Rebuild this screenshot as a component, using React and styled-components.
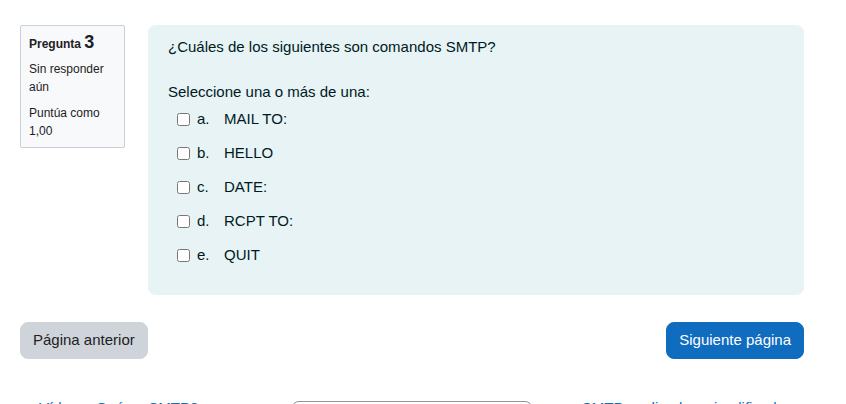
import React from "react";
import styled, { createGlobalStyle } from "styled-components";

const Global = createGlobalStyle`
  html, body { margin: 0; padding: 0; background: #fff; }
  body {
    font-family: "Liberation Sans", Arial, sans-serif;
    font-size: 15px;
    line-height: 22.5px;
    color: #1d2125;
  }
`;

const Page = styled.div`
  width: 846px;
  box-sizing: border-box;
  padding: 25px 42px 0 20px;
`;

const QuestionRow = styled.div`
  display: flex;
  align-items: flex-start;
  gap: 23px;
`;

const Info = styled.div`
  width: 105px;
  flex: none;
  box-sizing: border-box;
  background: #f8f9fa;
  border: 1px solid #cad0d7;
  border-radius: 2px;
  padding: 6px 8px 7px;
  color: #1d2125;
`;

const QNo = styled.h3`
  margin: 0 0 6px;
  font-size: 12px;
  line-height: 20px;
  font-weight: bold;
`;

const QNum = styled.span`
  font-size: 18px;
  line-height: 20px;
`;

const InfoText = styled.div`
  font-size: 12px;
  line-height: 18px;
  & + & { margin-top: 7.5px; }
`;

const Formulation = styled.div`
  flex: 1;
  background: #e7f3f5;
  color: #001a1e;
  border-radius: 8px;
  padding: 11px 20px 21.5px;
`;

const QText = styled.p`
  margin: 0 0 22.5px;
`;

const Prompt = styled.div``;

const Answers = styled.div`
  padding-left: 9px;
`;

const AnswerRow = styled.label`
  display: flex;
  align-items: center;
  padding: 4.5px 0;
  margin-bottom: 2.5px;
`;

const Check = styled.input`
  width: 13px;
  height: 13px;
  margin: 0 7px 0 0;
  flex: none;
`;

const AnsNum = styled.span`
  width: 27px;
  flex: none;
`;

const ButtonRow = styled.div`
  display: flex;
  justify-content: space-between;
  margin-top: 27px;
`;

const Button = styled.button`
  font-family: inherit;
  font-size: 15px;
  line-height: 22.5px;
  padding: 6px 12px;
  border: 1px solid transparent;
  border-radius: 8px;
  background: ${(p) => (p.$primary ? "#0f6cbf" : "#ced4da")};
  border-color: ${(p) => (p.$primary ? "#0f6cbf" : "#ced4da")};
  color: ${(p) => (p.$primary ? "#fff" : "#1d2125")};
  cursor: pointer;
`;

const ActivityNav = styled.div`
  display: grid;
  grid-template-columns: repeat(3, 1fr);
  column-gap: 30px;
  margin-top: 38.5px;
  align-items: start;
`;

const NavLink = styled.a`
  color: #0f6cbf;
  text-decoration: none;
  justify-self: ${(p) => (p.$end ? "end" : "start")};
`;

const Select = styled.select`
  margin-top: 4px;
  width: 100%;
  height: 38px;
  box-sizing: border-box;
  font-family: inherit;
  font-size: 15px;
  color: #1d2125;
  background: #fff;
  border: 1px solid #8f959e;
  border-radius: 8px;
  padding: 6px 12px;
`;

const options = [
  ["a.", "MAIL TO:"],
  ["b.", "HELLO"],
  ["c.", "DATE:"],
  ["d.", "RCPT TO:"],
  ["e.", "QUIT"],
];

export default function App() {
  return (
    <>
      <Global />
      <Page>
        <QuestionRow>
          <Info>
            <QNo>
              Pregunta <QNum>3</QNum>
            </QNo>
            <InfoText>Sin responder aún</InfoText>
            <InfoText>Puntúa como 1,00</InfoText>
          </Info>
          <Formulation>
            <QText>¿Cuáles de los siguientes son comandos SMTP?</QText>
            <Prompt>Seleccione una o más de una:</Prompt>
            <Answers>
              {options.map(([n, t]) => (
                <AnswerRow key={n}>
                  <Check type="checkbox" />
                  <AnsNum>{n}</AnsNum>
                  <span>{t}</span>
                </AnswerRow>
              ))}
            </Answers>
          </Formulation>
        </QuestionRow>
        <ButtonRow>
          <Button>Página anterior</Button>
          <Button $primary>Siguiente página</Button>
        </ButtonRow>
        <ActivityNav>
          <NavLink href="#">◄ Vídeo: ¿Qué es SMTP?</NavLink>
          <Select defaultValue="">
            <option value="">Ir a...</option>
          </Select>
          <NavLink href="#" $end>
            SMTP explicado y simplificado ►
          </NavLink>
        </ActivityNav>
      </Page>
    </>
  );
}
